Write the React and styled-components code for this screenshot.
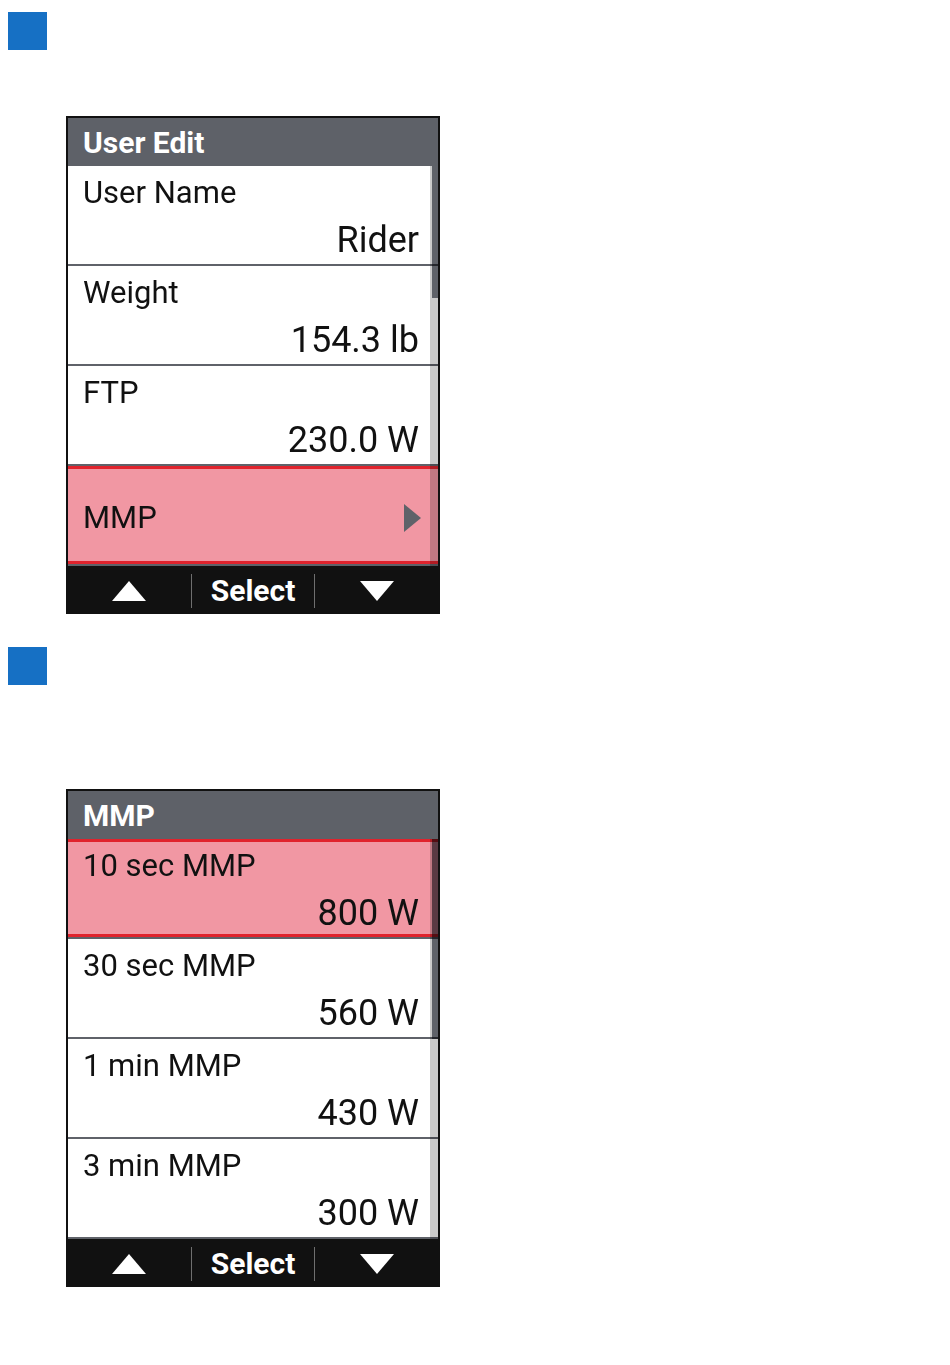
import React from "react";
import styled, { createGlobalStyle } from "styled-components";

const GlobalStyle = createGlobalStyle`
  body {
    margin: 0;
    background: #ffffff;
    font-family: Roboto, "Liberation Sans", sans-serif;
  }
`;

const screens = [
  {
    title: "User Edit",
    markerGap: 0,
    deviceGap: 66,
    thumb: 33,
    rows: [
      { label: "User Name", value: "Rider" },
      { label: "Weight", value: "154.3 lb" },
      { label: "FTP", value: "230.0 W" },
      { label: "MMP", nav: true, active: true },
    ],
  },
  {
    title: "MMP",
    markerGap: 33,
    deviceGap: 104,
    thumb: 50,
    rows: [
      { label: "10 sec MMP", value: "800 W", active: true },
      { label: "30 sec MMP", value: "560 W" },
      { label: "1 min MMP", value: "430 W" },
      { label: "3 min MMP", value: "300 W" },
    ],
  },
];

function UpArrow() {
  return (
    <svg width="34" height="20" viewBox="0 0 34 20">
      <polygon points="17,0 34,20 0,20" fill="#ffffff" />
    </svg>
  );
}

function DownArrow() {
  return (
    <svg width="34" height="20" viewBox="0 0 34 20">
      <polygon points="0,0 34,0 17,20" fill="#ffffff" />
    </svg>
  );
}

function Chevron() {
  return (
    <svg width="17" height="28" viewBox="0 0 17 28">
      <polygon points="0,0 17,14 0,28" fill="#5f6269" />
    </svg>
  );
}

function Screen({ screen }) {
  return (
    <Step>
      <Marker $gap={screen.markerGap} />
      <Device $gap={screen.deviceGap}>
        <Header>{screen.title}</Header>
        <List>
          {screen.rows.map((row) =>
            row.nav ? (
              <NavRow key={row.label} $active={row.active}>
                <Label>{row.label}</Label>
                <Chevron />
              </NavRow>
            ) : (
              <Row key={row.label} $active={row.active}>
                <Label>{row.label}</Label>
                <Value>{row.value}</Value>
              </Row>
            )
          )}
          <Track>
            <Thumb $size={screen.thumb} />
          </Track>
        </List>
        <Footer>
          <Slot>
            <UpArrow />
          </Slot>
          <Sep />
          <Slot>
            <FooterText>Select</FooterText>
          </Slot>
          <Sep />
          <Slot>
            <DownArrow />
          </Slot>
        </Footer>
      </Device>
    </Step>
  );
}

export default function App() {
  return (
    <>
      <GlobalStyle />
      <Page>
        {screens.map((s) => (
          <Screen key={s.title} screen={s} />
        ))}
      </Page>
    </>
  );
}

const Page = styled.div`
  display: flex;
  flex-direction: column;
  padding: 12px 0 60px 8px;
`;

const Step = styled.section`
  display: flex;
  flex-direction: column;
`;

const Marker = styled.div`
  width: 39px;
  height: 38px;
  margin-top: ${(p) => p.$gap}px;
  background: #1670c4;
`;

const Device = styled.div`
  width: 374px;
  box-sizing: border-box;
  margin: ${(p) => p.$gap}px 0 0 58px;
  border: 2px solid #111111;
  display: flex;
  flex-direction: column;
`;

const Header = styled.div`
  height: 48px;
  display: flex;
  align-items: center;
  padding-left: 15px;
  background: #5e6168;
  color: #ffffff;
  font-size: 30px;
  font-weight: 700;
`;

const List = styled.div`
  position: relative;
  isolation: isolate;
  display: flex;
  flex-direction: column;
  background: #ffffff;
`;

const Row = styled.div`
  height: 100px;
  box-sizing: border-box;
  display: flex;
  flex-direction: column;
  padding: 9px 19px 0 15px;
  border-bottom: 2px solid #5f6269;
  background: ${(p) => (p.$active ? "#f197a3" : "#ffffff")};
  box-shadow: ${(p) =>
    p.$active ? "inset 0 3px 0 #e0232d, inset 0 -3px 0 #e0232d" : "none"};
  color: #111111;
`;

const NavRow = styled(Row)`
  flex-direction: row;
  align-items: center;
  justify-content: space-between;
  padding: 5px 17px 0 15px;
`;

const Label = styled.div`
  font-size: 31px;
  line-height: 36px;
`;

const Value = styled.div`
  margin-top: 9px;
  font-size: 36px;
  line-height: 40px;
  text-align: right;
`;

const Track = styled.div`
  position: absolute;
  top: 0;
  right: 0;
  bottom: 0;
  width: 8px;
  background: #cbcbcb;
  mix-blend-mode: multiply;
`;

const Thumb = styled.div`
  position: absolute;
  top: 0;
  right: 0;
  width: 6px;
  height: ${(p) => p.$size}%;
  background: #5f6269;
`;

const Footer = styled.div`
  height: 46px;
  box-sizing: border-box;
  padding-top: 3px;
  display: flex;
  align-items: center;
  background: #111111;
`;

const Slot = styled.div`
  flex: 1;
  display: flex;
  align-items: center;
  justify-content: center;
`;

const Sep = styled.div`
  width: 1px;
  height: 34px;
  background: #6f6f6f;
`;

const FooterText = styled.span`
  color: #ffffff;
  font-size: 30px;
  font-weight: 700;
`;
